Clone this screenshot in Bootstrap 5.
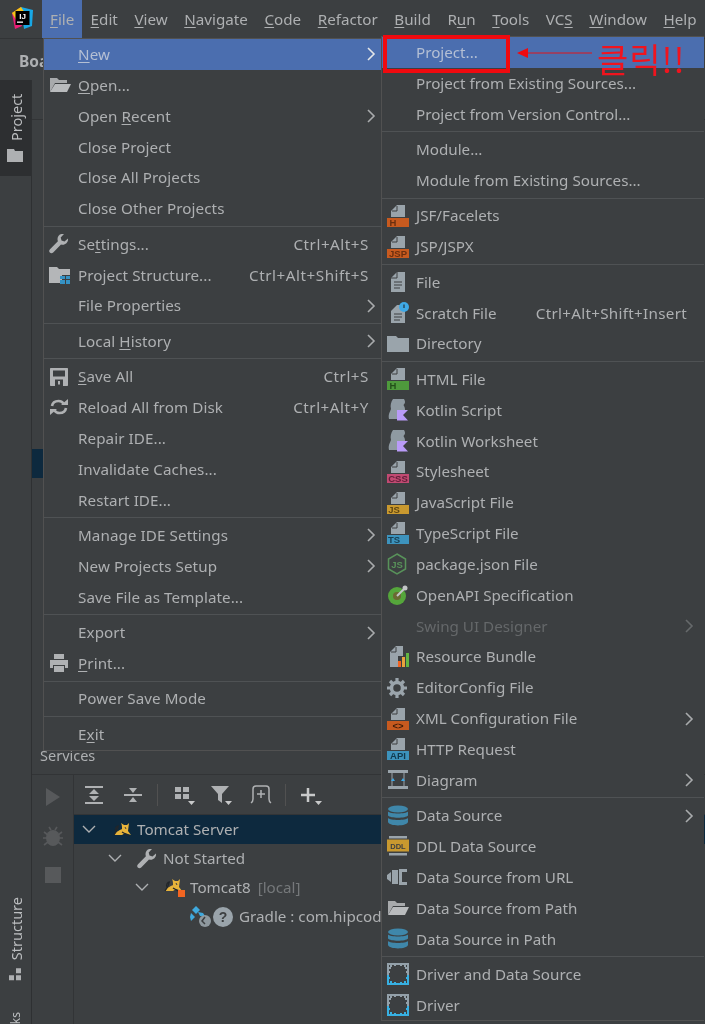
<!DOCTYPE html>
<html lang="en">
<head>
<meta charset="utf-8">
<title>IDE File menu</title>
<link rel="stylesheet" href="https://cdn.jsdelivr.net/npm/bootstrap@5.3.0/dist/css/bootstrap.min.css">
<style>
html,body{height:1024px;overflow:hidden;background:#3c3f41}
body{font-family:"Noto Sans","Noto Sans CJK KR",sans-serif;font-size:15.2px;color:#aeb0b2}
.ide-shot{position:relative;width:705px;height:1024px;overflow:hidden;background:#3c3f41;filter:blur(.45px)}
.ide-menubar{height:38px;font-size:15.2px}
.ide-logo{width:42px;flex:none;padding:6px 0 0 10px}
.ide-mi{padding:0 8.3px;line-height:38px;white-space:nowrap;flex:none}
.ide-mi:nth-child(2){padding:0 8px}
.ide-mi.ide-on{background:#4b6eaf}
u{text-underline-offset:2px;text-decoration-thickness:1px}
.ide-crumb{height:42px;padding-left:19px;font-weight:700;line-height:44px;font-size:15.5px;color:#aeb0b2;border-top:1px solid #323436}
.ide-main{height:944px;min-height:0}
.ide-rail{width:32px;border-right:1px solid #2e3032;flex:none}
.ide-tab{writing-mode:vertical-rl;transform:rotate(180deg);font-size:14.5px;line-height:32px;display:flex;align-items:center;gap:7px;color:#bcbec0}
.ide-tab-on{height:96px;background:#2d2f31;justify-content:flex-end;padding-bottom:14px}
.ide-tab-ic{transform:rotate(180deg);flex:none}
.ide-railend{margin-top:31px;font-size:12px}
.ide-upper{min-height:0}
.ide-headline{height:40px;border-bottom:1px solid #323436;flex:none}
.ide-sel-stub{height:29px;width:11px;margin-top:329px;background:#0d293e}
.ide-services{height:274px;flex:none}
.ide-svc-title{height:25px;padding-left:8px;line-height:10px;border-bottom:1px solid #323436;color:#aeb0b2;font-size:14.5px}
.ide-svc-left{width:42px;border-right:1px solid #323436;flex:none;padding-top:13px;gap:20px}
.ide-svc-tools{height:40px;border-bottom:1px solid #323436}
.ide-tool{width:39px;display:flex;justify-content:center;flex:none}
.ide-tool-c{margin-left:8px}
.ide-tool-d{margin-left:-2px}
.ide-tool-e{margin-left:6px}
.ide-toolsep{width:1px;height:22px;background:#515151;flex:none;margin-left:4.500px}
.ide-toolsep-b{margin-left:4.500px}
.ide-tree-row{height:29px;white-space:nowrap;font-size:15.2px;display:flex;align-items:center}
.ide-tree-sel{background:#0d293e}
.ide-tree-row svg{flex:none}
.ide-lv0{padding-left:8px}
.ide-lv1{padding-left:34px}
.ide-lv2{padding-left:61px}
.ide-lv3{padding-left:116px}
.ide-g0{margin:0 4px 0 17px}
.ide-g1{margin:0 6px 0 15px}
.ide-g2{margin:0 4px 0 15px}
.ide-g3{margin:0 6px 0 1px}
.ide-muted{color:#75787a;margin-left:3px}
.ide-menu.dropdown-menu{position:absolute;display:block;border-radius:0;background:#3c3f41;border:1px solid #515151;border-right-width:0;padding:0;margin:0;min-width:0;font-size:15.2px;color:#aeb0b2}
.ide-menu-a.dropdown-menu{left:43px;top:38px;width:338px;height:713px}
.ide-menu-b.dropdown-menu{left:381px;top:36px;width:323px;height:985px}
.ide-menu .dropdown-item{display:flex;align-items:center;height:30.85px;padding:0;color:#aeb0b2;white-space:nowrap;border:0}
.ide-menu-a .dropdown-item>span:nth-child(2){letter-spacing:.08px}
.ide-menu .dropdown-item.ide-hot{background:#4b6eaf;color:#b4bfd4}
.ide-menu .dropdown-item.ide-off{color:#65686a}
.ide-menu .dropdown-divider{height:4.6px;margin:0;border:0;display:flex;align-items:center;opacity:1}
.ide-menu .dropdown-divider::after{content:"";flex:1;height:1px;background:#4f5254}
.ide-ic{width:34px;flex:none;display:flex;align-items:center;padding-left:5px}
.ide-ic svg{display:block}
.ide-key{margin-left:auto;margin-right:12px;letter-spacing:.55px}
.ide-menu-b .ide-key{margin-right:17px;letter-spacing:.3px}
.ide-chev{margin-left:auto;margin-right:5px;flex:none}
.ide-menu-b .ide-chev{margin-right:10px}
.ide-callout,.ide-arrow,.ide-click{position:absolute;z-index:1001}
.ide-callout{left:383px;top:35px;width:127px;height:37.500px;border:4px solid #f00a0f}
.ide-arrow{left:517px;top:46px}
.ide-click{left:597px;top:31px;color:#f0141e;font-family:"Noto Sans CJK KR",sans-serif;font-size:34px;font-weight:400;letter-spacing:1px;line-height:56px;white-space:nowrap}
.bandtxt{font-family:"Liberation Sans",sans-serif;font-size:9.5px;font-weight:700;text-anchor:middle}
.bandtxt-sm{font-size:7.5px}
</style>
</head>
<body>
<svg width="0" height="0" class="position-absolute">
<defs>
<symbol id="pg" viewBox="0 0 22 22"><path d="M10 0h8v12H4V6z" fill="#9aa4ab"/><path d="M10 1v5H5" fill="none" stroke="#3c3f41" stroke-width="1"/></symbol>
<symbol id="folderopen" viewBox="0 0 22 16"><path d="M1 1h7l2 2h8v3H6L1 15z" fill="#a8aaac"/><path d="M6 7h16l-4 8H1z" fill="#b9bbbd"/></symbol>
<symbol id="wrench" viewBox="0 0 20 20"><path d="M19 4.500l-3.500 3-3-1-.8-3L15 0c-3.500-.7-6.500 1.500-6.500 5 0 1 .2 1.600.4 2.300L1 15.200c-1.200 1.200-1 2.500-.2 3.400.9.900 2.300 1 3.400-.1l7.800-7.900c3.800 1.200 7.600-1.900 7-6.100z" fill="#afb1b3"/></symbol>
<symbol id="db" viewBox="0 0 22 22"><g fill="#3f87aa"><ellipse cx="11" cy="4" rx="10" ry="3.500"/><path d="M1 6.500c2 2.600 18 2.600 20 0v4c-2 3-18 3-20 0zM1 13c2 2.600 18 2.600 20 0v4c-1 4.500-19 4.500-20 0z"/></g></symbol>
<symbol id="drv" viewBox="0 0 22 22"><path d="M1 12V1h20v11M4 1v3M8 1v2M14 1v2M18 1v3M1 5h3M1 9h2M21 5h-3M21 9h-2" fill="none" stroke="#93a0a9" stroke-width="2"/><path d="M1 12v9h20v-9M4 21v-3M8 21v-2M14 21v-2M18 21v-3M1 15h2M21 15h-2" fill="none" stroke="#37b0e2" stroke-width="2"/></symbol>
<symbol id="kt" viewBox="0 0 22 22"><path d="M6 0h11c1.500 2.500 1.500 4-.5 6 1 1.500 1.500 3 1.500 5H10v9H2c-1-5 1-7 2-10C3 6 4 3 6 0z" fill="#8f9aa2"/><path d="M10 11h11l-5 5 5 5.500H10z" fill="#b99bf8"/></symbol>
<symbol id="tom" viewBox="0 0 20 16"><path d="M1 13c3-4 6-5 8-6 0-2 0-4-1-6l3 2h3l2-2-1 8 3 4-6-2-3 2z" fill="#e7b33a"/><path d="M1 13l3-5 1-3M9 10l7 4M6 4c-3 0-4 3-3 5" fill="none" stroke="#22262a" stroke-width="1.300"/><path d="M12 5l1 2" stroke="#3c3f41"/></symbol>
<symbol id="chv" viewBox="0 0 10 14"><path d="M2 1l6 6-6 6" fill="none" stroke="#a9abad" stroke-width="1.600"/></symbol>
<symbol id="dn" viewBox="0 0 14 10"><path d="M1 1l6 6 6-6" fill="none" stroke="#aeb0b2" stroke-width="1.400"/></symbol>
</defs>
</svg>

<div class="ide-shot">
  <div class="ide-menubar d-flex">
    <div class="ide-logo">
      <svg width="24" height="25" viewBox="0 0 24 25"><path d="M2 7l9-6v10z" fill="#f97a12"/><path d="M2 7l3 16 7-3-3-9z" fill="#ee1f78"/><path d="M11 1l12 3-1 16-8 3z" fill="#18a8e6"/><path d="M2 7l9-6 4 6-9 7z" fill="#f6c419"/><rect x="5.500" y="5" width="14" height="14" fill="#000"/><text x="12.500" y="13" fill="#fff" font-size="8" font-family="Liberation Sans,sans-serif" font-weight="700" text-anchor="middle">IJ</text><rect x="7" y="15.500" width="6" height="1.300" fill="#fff"/></svg>
    </div>
    <div class="ide-mi ide-on"><u>F</u>ile</div>
    <div class="ide-mi"><u>E</u>dit</div>
    <div class="ide-mi"><u>V</u>iew</div>
    <div class="ide-mi"><u>N</u>avigate</div>
    <div class="ide-mi"><u>C</u>ode</div>
    <div class="ide-mi"><u>R</u>efactor</div>
    <div class="ide-mi"><u>B</u>uild</div>
    <div class="ide-mi">R<u>u</u>n</div>
    <div class="ide-mi"><u>T</u>ools</div>
    <div class="ide-mi">VC<u>S</u></div>
    <div class="ide-mi"><u>W</u>indow</div>
    <div class="ide-mi"><u>H</u>elp</div>
  </div>
  <div class="ide-crumb">Board</div>
  <div class="ide-main d-flex">
    <div class="ide-rail d-flex flex-column justify-content-between">
      <div class="ide-tab ide-tab-on"><svg class="ide-tab-ic" width="16" height="14" viewBox="0 0 16 14"><path d="M0 1h7l1 2h8v11H0z" fill="#aeb0b2"/></svg><span>Project</span></div>
      <div class="d-flex flex-column">
        <div class="ide-tab"><svg class="ide-tab-ic" width="14" height="14" viewBox="0 0 14 14"><path d="M1 8h5v5H1zM8 8h5v5H8zM8 1h5v5H8z" fill="#aeb0b2"/></svg><span>Structure</span></div>
        <div class="ide-tab ide-railend"><span>ks</span></div>
      </div>
    </div>
    <div class="flex-grow-1 d-flex flex-column min-w-0">
      <div class="ide-upper flex-grow-1">
        <div class="ide-headline"></div>
        <div class="ide-sel-stub"></div>
      </div>
      <div class="ide-services d-flex flex-column">
        <div class="ide-svc-title">Services</div>
        <div class="d-flex flex-grow-1">
          <div class="ide-svc-left d-flex flex-column align-items-center">
            <svg width="16" height="18" viewBox="0 0 16 18"><path d="M1 0l14 9-14 9z" fill="#57595b"/></svg>
            <svg width="20" height="21" viewBox="0 0 20 21"><g fill="#57595b"><ellipse cx="10" cy="12" rx="7" ry="8"/><path d="M1 6l4 3M19 6l-4 3M0 12h4M20 12h-4M1 19l4-3M19 19l-4-3M6 1l2 3M14 1l-2 3" stroke="#57595b" stroke-width="1.600"/></g></svg>
            <svg width="16" height="16" viewBox="0 0 16 16"><rect width="16" height="16" fill="#57595b"/></svg>
          </div>
          <div class="flex-grow-1">
            <div class="ide-svc-tools d-flex align-items-center">
              <div class="ide-tool"><svg width="20" height="20" viewBox="0 0 20 20"><path d="M1 1h18v2H1zM1 17h18v2H1zM10 4l5 5H5zM10 16l-5-5h10z" fill="#afb1b3"/></svg></div>
              <div class="ide-tool"><svg width="20" height="20" viewBox="0 0 20 20"><path d="M1 9h18v2H1zM10 8L6 3h8zM10 12l4 5H6z" fill="#afb1b3"/></svg></div>
              <div class="ide-toolsep"></div>
              <div class="ide-tool ide-tool-c"><svg width="24" height="22" viewBox="0 0 24 22"><path d="M2 3h6v5H2zM10 3h6v5h-6zM2 10h6v5H2zM10 10h6v5h-6z" fill="#afb1b3"/><path d="M15 17h7l-3.500 4z" fill="#c8c9ca"/></svg></div>
              <div class="ide-tool ide-tool-d"><svg width="24" height="22" viewBox="0 0 24 22"><path d="M1 2h18l-7 8v9l-4-3v-6z" fill="#afb1b3"/><path d="M15 17h7l-3.500 4z" fill="#c8c9ca"/></svg></div>
              <div class="ide-tool"><svg width="24" height="22" viewBox="0 0 24 22"><path d="M2 19c1.500-1 2-2 2-4V5c0-2 1-3 3-3h10c2 0 3 1 3 3v10c0 2 .5 3 2 4M12 6v8M8 10h8" fill="none" stroke="#afb1b3" stroke-width="1.500"/></svg></div>
              <div class="ide-toolsep ide-toolsep-b"></div>
              <div class="ide-tool ide-tool-e"><svg width="24" height="22" viewBox="0 0 24 22"><path d="M8 4v14M1 11h14" stroke="#c8c9ca" stroke-width="2.500"/><path d="M15 17h7l-3.500 4z" fill="#c8c9ca"/></svg></div>
            </div>
            <div class="ide-tree-row ide-tree-sel ide-lv0"><svg width="14" height="10"><use href="#dn"/></svg><svg class="ide-g0" width="20" height="16"><use href="#tom"/></svg>Tomcat Server</div>
            <div class="ide-tree-row ide-lv1"><svg width="14" height="10"><use href="#dn"/></svg><svg class="ide-g1" width="20" height="20"><use href="#wrench"/></svg>Not Started</div>
            <div class="ide-tree-row ide-lv2"><svg width="14" height="10"><use href="#dn"/></svg><svg class="ide-g2" width="22" height="20" viewBox="0 0 22 20"><use href="#tom" width="20" height="16"/><rect x="14" y="12" width="7" height="7" fill="#f26522"/></svg>Tomcat8&nbsp;<span class="ide-muted">[local]</span></div>
            <div class="ide-tree-row ide-lv3"><svg width="22" height="22" viewBox="0 0 22 22"><path d="M6 0l4 4-4 4-4-4zM1 7l4 4-4 4-1-4zM8 6l5 1 2 3h-5z" fill="#3fa9dd"/><circle cx="15" cy="15" r="6" fill="#8f999f"/><path d="M15 11l-3 4 3 3" stroke="#3c3f41" fill="none" stroke-width="1.500"/></svg><svg class="ide-g3" width="20" height="20" viewBox="0 0 20 20"><circle cx="10" cy="10" r="10" fill="#9aa4ab"/><text x="10" y="15" text-anchor="middle" font-family="Liberation Sans,sans-serif" font-weight="700" font-size="14" fill="#3c3f41">?</text></svg>Gradle : com.hipcod</div>
          </div>
        </div>
      </div>
    </div>
  </div>

  <!-- File menu -->
  <div class="ide-menu ide-menu-a dropdown-menu show">
    <a class="dropdown-item ide-hot"><span class="ide-ic"></span><span><u>N</u>ew</span><svg class="ide-chev" width="10" height="14" viewBox="0 0 10 14"><path d="M2 1l6 6-6 6" fill="none" stroke="#e4e6e8" stroke-width="1.600"/></svg></a>
    <a class="dropdown-item"><span class="ide-ic"><svg width="22" height="16"><use href="#folderopen"/></svg></span><span><u>O</u>pen...</span></a>
    <a class="dropdown-item"><span class="ide-ic"></span><span>Open <u>R</u>ecent</span><svg class="ide-chev" width="10" height="14"><use href="#chv"/></svg></a>
    <a class="dropdown-item"><span class="ide-ic"></span><span>Close Project</span></a>
    <a class="dropdown-item"><span class="ide-ic"></span><span>Close All Projects</span></a>
    <a class="dropdown-item"><span class="ide-ic"></span><span>Close Other Projects</span></a>
    <div class="dropdown-divider"></div>
    <a class="dropdown-item"><span class="ide-ic"><svg width="20" height="20"><use href="#wrench"/></svg></span><span>Se<u>t</u>tings...</span><span class="ide-key">Ctrl+Alt+S</span></a>
    <a class="dropdown-item"><span class="ide-ic"><svg width="22" height="18" viewBox="0 0 22 18"><path d="M0 1h8l2 2h11v6h-8v8H0z" fill="#b4b6b8"/><path d="M11 10h5v3h-5zM17 10h4v3h-4zM11 14h5v4h-5zM17 14h4v4h-4z" fill="#3592c4"/></svg></span><span>Project Structure...</span><span class="ide-key">Ctrl+Alt+Shift+S</span></a>
    <a class="dropdown-item"><span class="ide-ic"></span><span>File Properties</span><svg class="ide-chev" width="10" height="14"><use href="#chv"/></svg></a>
    <div class="dropdown-divider"></div>
    <a class="dropdown-item"><span class="ide-ic"></span><span>Local <u>H</u>istory</span><svg class="ide-chev" width="10" height="14"><use href="#chv"/></svg></a>
    <div class="dropdown-divider"></div>
    <a class="dropdown-item"><span class="ide-ic"><svg width="20" height="20" viewBox="0 0 20 20"><path d="M2 1h16c.6 0 1 .4 1 1v16c0 .6-.4 1-1 1H2c-.6 0-1-.4-1-1V2c0-.6.4-1 1-1z" fill="#afb1b3"/><rect x="4" y="3.500" width="12" height="6" fill="#3c3f41"/><rect x="6" y="12.500" width="8" height="6.500" fill="#3c3f41"/><rect x="9" y="14" width="2" height="3.500" fill="#afb1b3"/></svg></span><span><u>S</u>ave All</span><span class="ide-key">Ctrl+S</span></a>
    <a class="dropdown-item"><span class="ide-ic"><svg width="20" height="18" viewBox="0 0 20 18"><path d="M3 8c.5-3 3-5 6.500-5 2.500 0 4 1 5 2.500M17 10c-.5 3-3 5-6.500 5-2.500 0-4-1-5-2.500" fill="none" stroke="#afb1b3" stroke-width="2.600"/><path d="M12 7h7V1zM8 11H1v6z" fill="#afb1b3"/></svg></span><span>Reload All from Disk</span><span class="ide-key">Ctrl+Alt+Y</span></a>
    <a class="dropdown-item"><span class="ide-ic"></span><span>Repair IDE...</span></a>
    <a class="dropdown-item"><span class="ide-ic"></span><span>Invalidate Caches...</span></a>
    <a class="dropdown-item"><span class="ide-ic"></span><span>Restart IDE...</span></a>
    <div class="dropdown-divider"></div>
    <a class="dropdown-item"><span class="ide-ic"></span><span>Manage IDE Settings</span><svg class="ide-chev" width="10" height="14"><use href="#chv"/></svg></a>
    <a class="dropdown-item"><span class="ide-ic"></span><span>New Projects Setup</span><svg class="ide-chev" width="10" height="14"><use href="#chv"/></svg></a>
    <a class="dropdown-item"><span class="ide-ic"></span><span>Save File as Template...</span></a>
    <div class="dropdown-divider"></div>
    <a class="dropdown-item"><span class="ide-ic"></span><span>Export</span><svg class="ide-chev" width="10" height="14"><use href="#chv"/></svg></a>
    <a class="dropdown-item"><span class="ide-ic"><svg width="20" height="18" viewBox="0 0 20 18"><path d="M5 0h10v5H5zM1 6h18v8h-3v-3H4v3H1zM5 12h10v6H5z" fill="#afb1b3"/></svg></span><span><u>P</u>rint...</span></a>
    <div class="dropdown-divider"></div>
    <a class="dropdown-item"><span class="ide-ic"></span><span>Power Save Mode</span></a>
    <div class="dropdown-divider"></div>
    <a class="dropdown-item"><span class="ide-ic"></span><span>E<u>x</u>it</span></a>
  </div>

  <!-- New submenu -->
  <div class="ide-menu ide-menu-b dropdown-menu show">
    <a class="dropdown-item ide-hot"><span class="ide-ic"></span><span>Project...</span></a>
    <a class="dropdown-item"><span class="ide-ic"></span><span>Project from Existing Sources...</span></a>
    <a class="dropdown-item"><span class="ide-ic"></span><span>Project from Version Control...</span></a>
    <div class="dropdown-divider"></div>
    <a class="dropdown-item"><span class="ide-ic"></span><span>Module...</span></a>
    <a class="dropdown-item"><span class="ide-ic"></span><span>Module from Existing Sources...</span></a>
    <div class="dropdown-divider"></div>
    <a class="dropdown-item"><span class="ide-ic"><svg width="22" height="22" viewBox="0 0 22 22"><use href="#pg"/><rect y="13" width="22" height="9" fill="#c75a1f"/><text class="bandtxt" x="6" y="21" fill="#6b2f0f">H</text></svg></span><span>JSF/Facelets</span></a>
    <a class="dropdown-item"><span class="ide-ic"><svg width="22" height="22" viewBox="0 0 22 22"><use href="#pg"/><rect y="13" width="22" height="9" fill="#c75a1f"/><text class="bandtxt" x="11" y="21" fill="#6b2f0f">JSP</text></svg></span><span>JSP/JSPX</span></a>
    <div class="dropdown-divider"></div>
    <a class="dropdown-item"><span class="ide-ic"><svg width="22" height="22" viewBox="0 0 22 22"><path d="M10 1h8v20H4V7z" fill="#9aa4ab"/><path d="M10 1v6H4" fill="none" stroke="#3c3f41"/><path d="M7 11h8M7 14h8M7 17h6" stroke="#3c3f41"/></svg></span><span>File</span></a>
    <a class="dropdown-item"><span class="ide-ic"><svg width="22" height="22" viewBox="0 0 22 22"><path d="M10 3h8v18H4V9z" fill="#9aa4ab"/><path d="M7 12h8M7 15h8M7 18h6" stroke="#3c3f41"/><circle cx="17" cy="5" r="5" fill="#3fa9e6"/><path d="M17 2.500V6" stroke="#22333f" stroke-width="1.200"/></svg></span><span>Scratch File</span><span class="ide-key">Ctrl+Alt+Shift+Insert</span></a>
    <a class="dropdown-item"><span class="ide-ic"><svg width="22" height="18" viewBox="0 0 22 18"><path d="M0 1h9l2 2h11v14H0z" fill="#9aa4ab"/></svg></span><span>Directory</span></a>
    <div class="dropdown-divider"></div>
    <a class="dropdown-item"><span class="ide-ic"><svg width="22" height="22" viewBox="0 0 22 22"><use href="#pg"/><rect y="13" width="22" height="9" fill="#4e9a3c"/><text class="bandtxt" x="6" y="21" fill="#234f1a">H</text></svg></span><span>HTML File</span></a>
    <a class="dropdown-item"><span class="ide-ic"><svg width="22" height="22"><use href="#kt"/></svg></span><span>Kotlin Script</span></a>
    <a class="dropdown-item"><span class="ide-ic"><svg width="22" height="22"><use href="#kt"/></svg></span><span>Kotlin Worksheet</span></a>
    <a class="dropdown-item"><span class="ide-ic"><svg width="22" height="22" viewBox="0 0 22 22"><use href="#pg"/><rect y="13" width="22" height="9" fill="#c14a72"/><text class="bandtxt" x="11" y="21" fill="#5f1f38">CSS</text></svg></span><span>Stylesheet</span></a>
    <a class="dropdown-item"><span class="ide-ic"><svg width="22" height="22" viewBox="0 0 22 22"><use href="#pg"/><rect y="13" width="22" height="9" fill="#c9992f"/><text class="bandtxt" x="7" y="21" fill="#5f4713">JS</text></svg></span><span>JavaScript File</span></a>
    <a class="dropdown-item"><span class="ide-ic"><svg width="22" height="22" viewBox="0 0 22 22"><use href="#pg"/><rect y="13" width="22" height="9" fill="#3d93bd"/><text class="bandtxt" x="7" y="21" fill="#183f53">TS</text></svg></span><span>TypeScript File</span></a>
    <a class="dropdown-item"><span class="ide-ic"><svg width="20" height="22" viewBox="0 0 20 22"><path d="M10 1l8.500 5v10L10 21l-8.500-5V6z" fill="none" stroke="#58925a" stroke-width="1.500"/><text x="10" y="15" text-anchor="middle" font-family="Liberation Sans,sans-serif" font-size="9.500" font-weight="700" fill="#58925a">JS</text></svg></span><span>package.json File</span></a>
    <a class="dropdown-item"><span class="ide-ic"><svg width="22" height="22" viewBox="0 0 22 22"><circle cx="10" cy="12" r="9" fill="#55a63b"/><circle cx="10" cy="12" r="4" fill="#6b6a32"/><path d="M10 12l8-8" stroke="#c3c5c7" stroke-width="2"/><circle cx="18" cy="4" r="2.500" fill="#c3c5c7"/></svg></span><span>OpenAPI Specification</span></a>
    <a class="dropdown-item ide-off"><span class="ide-ic"></span><span>Swing UI Designer</span><svg class="ide-chev" width="10" height="14" viewBox="0 0 10 14"><path d="M2 1l6 6-6 6" fill="none" stroke="#66696b" stroke-width="1.600"/></svg></a>
    <a class="dropdown-item"><span class="ide-ic"><svg width="22" height="22" viewBox="0 0 22 22"><path d="M9 0h7v10h-5v11H3V6z" fill="#9aa4ab"/><path d="M9 1v5H4" fill="none" stroke="#3c3f41"/><rect x="11" y="15" width="3" height="6" fill="#f26522"/><rect x="15" y="11" width="3" height="10" fill="#e8a33d"/><rect x="19" y="7" width="3" height="14" fill="#62b543"/></svg></span><span>Resource Bundle</span></a>
    <a class="dropdown-item"><span class="ide-ic"><svg width="20" height="20" viewBox="0 0 20 20"><circle cx="10" cy="10" r="5.500" fill="none" stroke="#9aa4ab" stroke-width="3.500"/><path d="M10 0v4M10 16v4M0 10h4M16 10h4M3 3l3 3M14 14l3 3M17 3l-3 3M6 14l-3 3" stroke="#9aa4ab" stroke-width="3.200"/></svg></span><span>EditorConfig File</span></a>
    <a class="dropdown-item"><span class="ide-ic"><svg width="22" height="22" viewBox="0 0 22 22"><use href="#pg"/><rect y="13" width="22" height="9" fill="#c75a1f"/><text class="bandtxt" x="11" y="21" fill="#3c1b08">&lt;&gt;</text></svg></span><span>XML Configuration File</span><svg class="ide-chev" width="10" height="14"><use href="#chv"/></svg></a>
    <a class="dropdown-item"><span class="ide-ic"><svg width="22" height="22" viewBox="0 0 22 22"><use href="#pg"/><rect y="13" width="22" height="9" fill="#3d93bd"/><text class="bandtxt" x="11" y="21" fill="#123a4f">API</text></svg></span><span>HTTP Request</span></a>
    <a class="dropdown-item"><span class="ide-ic"><svg width="22" height="20" viewBox="0 0 22 20"><rect width="20" height="3" x="1" y="0" fill="#9aa4ab"/><rect width="20" height="3" x="1" y="16" fill="#9aa4ab"/><path d="M5 3v13M17 3v13" stroke="#9aa4ab"/><path d="M6 8l2 3H4zM16 8l2 3h-4z" fill="#3fa9e6"/></svg></span><span>Diagram</span><svg class="ide-chev" width="10" height="14"><use href="#chv"/></svg></a>
    <div class="dropdown-divider"></div>
    <a class="dropdown-item"><span class="ide-ic"><svg width="22" height="22"><use href="#db"/></svg></span><span>Data Source</span><svg class="ide-chev" width="10" height="14"><use href="#chv"/></svg></a>
    <a class="dropdown-item"><span class="ide-ic"><svg width="22" height="20" viewBox="0 0 22 20"><rect x="2" y="0" width="18" height="2.500" fill="#9aa4ab"/><rect x="0" y="3.500" width="22" height="12" fill="#c9992f"/><rect x="2" y="17" width="18" height="2.500" fill="#9aa4ab"/><text class="bandtxt bandtxt-sm" x="11" y="13" fill="#3c3f41">DDL</text></svg></span><span>DDL Data Source</span></a>
    <a class="dropdown-item"><span class="ide-ic"><svg width="22" height="18" viewBox="0 0 22 18"><path d="M0 7l4-3v10l-4-3zM5 2h6v14H5zM12 1h8v3h-5v10h5v3h-8z" fill="#9aa4ab"/></svg></span><span>Data Source from URL</span></a>
    <a class="dropdown-item"><span class="ide-ic"><svg width="22" height="16"><use href="#folderopen"/></svg></span><span>Data Source from Path</span></a>
    <a class="dropdown-item"><span class="ide-ic"><svg width="22" height="22"><use href="#db"/></svg></span><span>Data Source in Path</span></a>
    <div class="dropdown-divider"></div>
    <a class="dropdown-item"><span class="ide-ic"><svg width="22" height="22"><use href="#drv"/></svg></span><span>Driver and Data Source</span></a>
    <a class="dropdown-item"><span class="ide-ic"><svg width="22" height="22"><use href="#drv"/></svg></span><span>Driver</span></a>
  </div>

  <div class="ide-callout"></div>
  <svg class="ide-arrow" width="76" height="14" viewBox="0 0 76 14"><path d="M75 7H9" stroke="#e0141a" stroke-width="1"/><path d="M0 7l11-5v10z" fill="#f00a0f"/></svg>
  <div class="ide-click">클릭!!</div>
</div>
<script src="https://cdn.jsdelivr.net/npm/bootstrap@5.3.0/dist/js/bootstrap.bundle.min.js"></script>
</body>
</html>
